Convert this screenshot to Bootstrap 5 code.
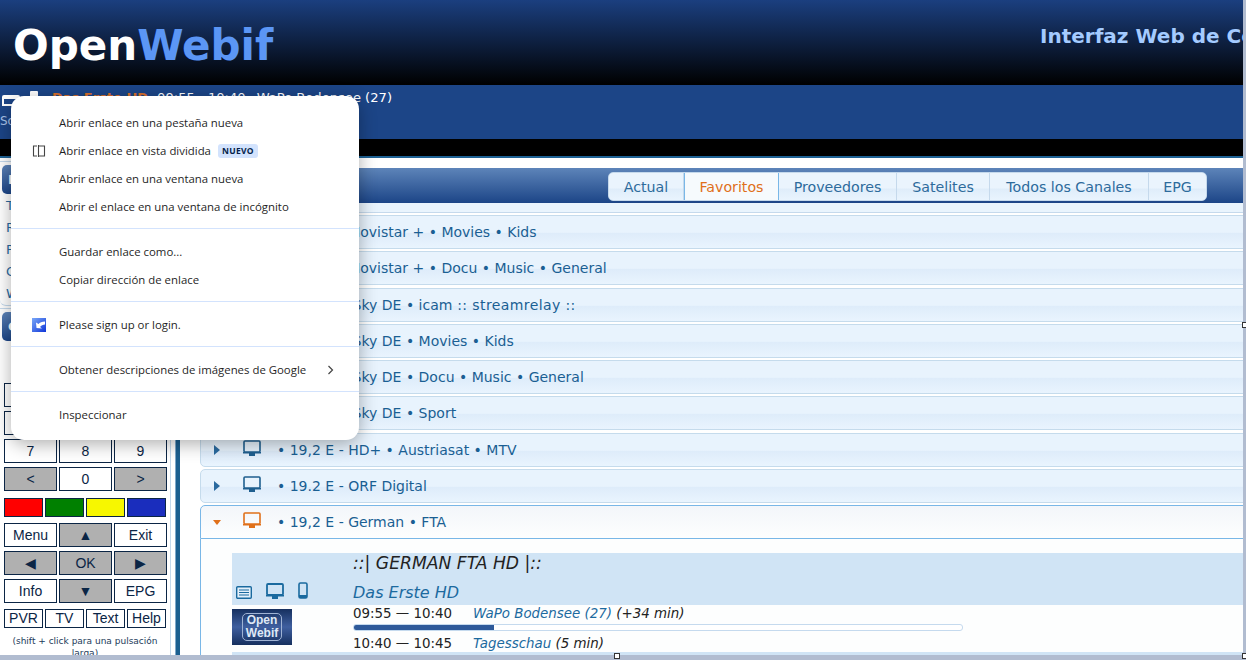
<!DOCTYPE html>
<html lang="es">
<head>
    <meta charset="UTF-8">
    <title>OpenWebif</title>
    <link href="https://cdn.jsdelivr.net/npm/bootstrap@5.3.0/dist/css/bootstrap.min.css" rel="stylesheet">
    <style>
        html, body { height: 660px; overflow: hidden; }
        body { background: #b1bcd0; font-family: "DejaVu Sans", sans-serif; font-size: 14px; color: #222; }
        .page-wrap { width: 1243px; height: 655px; overflow: hidden; background: #fff; }

        .top-head { height: 85px; background: linear-gradient(#1b3f7f, #000); }
        .logo-text { font-size: 42px; font-weight: 700; color: #fff; padding-left: 13px; line-height: 92px; width: 1040px; flex: none; }
        .logo-text span { color: #5b96f5; }
        .head-title { font-size: 20px; font-weight: 700; color: #a4cbff; white-space: nowrap; line-height: 72px; }

        .now-bar { height: 54px; background: #1c4587; color: #fff; font-size: 13.1px; position: relative; }
        .now-line { height: 24px; white-space: nowrap; padding: 1px 0 0 2px; }
        .now-line b { color: #d9702c; font-weight: 700; margin: 0 9px 0 13px; font-size: 13px; }
        .now-line svg { margin-right: 9px; }
        .now-line svg + svg { margin-right: 0; }
        .now-time { margin-right: 11px; }
        .now-soft { color: #a9c4ea; font-size: 12px; line-height: 16px; margin-top: 4px; }
        .black-gap { height: 19px; background: #000; border-bottom: 2px solid #1e6294; }

        .left-col { width: 171px; flex: none; padding: 3px 0 0 0; }
        .side-panel { border: 1px solid #c4d9ec; border-left: 0; border-radius: 0 6px 6px 6px; padding: 3px 2px 0 2px; margin-bottom: 2px; }
        .side-head { height: 29px; width: 162px; border-radius: 5px; background: linear-gradient(#5c83b8, #1c4587); color: #fff; padding: 5px 6px; font-weight: 700; font-size: 13px; }
        .side-link { display: block; color: #2a6a9f; text-decoration: none; font-size: 13px; line-height: 22px; padding-left: 4px; }
        .side-link:first-of-type { margin-top: 1px; }

        .remote-wrap { border-right: 1px solid #c4d9ec; padding: 42px 3px 0 4px; height: 336px; overflow: hidden; }
        .key-grid { display: grid; grid-template-columns: 53px 53px 53px; gap: 4px 2px; margin-bottom: 4px; }
        .key-btn { height: 24px; background: #fff; border: 1px solid #0b2545; color: #0b2545; font-family: "Liberation Sans", sans-serif; font-size: 14px; line-height: 22px; text-align: center; }
        .key-grey { background: #b0b0b0; }
        .key-four { display: grid; grid-template-columns: 39px 39px 39px 39px; gap: 2px; padding-top: 2px; }
        .key-colors { padding-top: 3px; padding-bottom: 2px; margin-bottom: 4px; }
        .key-color { height: 19px; border: 1px solid #0b2545; }
        .key-red { background: #ff0000; }
        .key-green { background: #008000; }
        .key-yellow { background: #f7f700; }
        .key-blue { background: #1a2dbd; }
        .key-small { height: 19px; border: 1px solid #0b2545; font-family: "Liberation Sans", sans-serif; font-size: 14px; line-height: 17px; text-align: center; color: #0b2545; }
        .remote-note { font-size: 9px; line-height: 12px; text-align: center; margin: 7px 4px 0 3px; color: #1c3a5a; }

        .side-rule { width: 5px; flex: none; margin-left: 4px; background: #1b5f8f; border-left: 1px solid #7fa8c9; }
        .right-col { flex: 1; min-width: 0; padding: 10px 0 0 20px; overflow: hidden; }
        .tab-bar { height: 35px; padding: 4px 0 0 408px; background: linear-gradient(#5d84b9, #1c4587); }
        .tab-group { width: 599px; height: 29px; border: 1px solid #c5d9ec; border-radius: 5px; background: linear-gradient(#eaf4fd 55%, #dfedfa 60%, #e9f4fe); overflow: hidden; }
        .tab-item { color: #2d6b9c; font-size: 14.2px; line-height: 29px; text-align: center; border-right: 1px solid #c5d9ec; text-decoration: none; flex: none; }
        .tab-item.is-on { color: #e0701a; background: #f6fafd; border: 1px solid #79b7e7; border-width: 0 1px; }
        .tab-w1 { width: 75px; }
        .tab-w2 { width: 95px; }
        .tab-w3 { width: 118px; }
        .tab-w4 { width: 93px; }
        .tab-w5 { width: 159px; }
        .tab-w6 { width: 57px; border-right: 0; }

        .rows-top { height: 10px; background: #e9f4fd; border-bottom: 1px solid #c5d9ec; margin-bottom: 2px; }
        .bq-row { height: 34px; margin: 0 -6px 2.25px 0; border: 1px solid #c5dbec; border-radius: 5px 0 0 5px; background: linear-gradient(#e8f3fd 51%, #deecfa 54%, #e9f4fe); color: #1a5f93; display: flex; align-items: center; font-size: 14px; line-height: 32px; }
        .bq-row.is-open { border-color: #79b7e7; border-radius: 5px 0 0 0; margin-bottom: 0; background: linear-gradient(#f3f6fa, #fdfefe); }
        .bq-caret { width: 0; height: 0; margin-left: 13px; border-left: 6px solid #2a6a9f; border-top: 5px solid transparent; border-bottom: 5px solid transparent; flex: none; }
        .bq-row.is-open .bq-caret { border: 4px solid transparent; border-top: 5px solid #e0701a; border-bottom: 0; margin-left: 12px; }
        .bq-screen { margin: -3px 16px 0 23px; flex: none; }
        .bq-row.is-open .bq-screen { margin-left: 22px; }
        .bq-open-body { height: 120px; margin-right: -6px; border-left: 1px solid #79b7e7; padding: 14px 0 0 31px; background: #fdfefe; }
        .wide-text { letter-spacing: .4px; }

        .chan-band { height: 52px; background: #d0e4f5; }
        .chan-icons { width: 121px; flex: none; padding: 0 0 6px 4px; gap: 14px; }
        .chan-titles { font-style: italic; font-size: 16px; line-height: 26px; }
        .chan-name { font-size: 17.2px; line-height: 20px; margin-bottom: 7px; }
        .chan-titles a { color: #1c6a9f; text-decoration: none; }
        .epg-row { height: 47px; }
        .picon-box { width: 60px; height: 36px; margin: 4px 61px 0 0; flex: none; background: linear-gradient(#16305f, #3f5f9f 50%, #16305f); padding: 4px 10px; }
        .picon-inner { height: 28px; border: 1px solid #9fb3d4; border-radius: 5px; color: #dfe8f5; font-size: 12px; font-weight: 700; line-height: 13px; text-align: center; font-family: "Liberation Sans", sans-serif; }
        .epg-line { font-size: 13.4px; line-height: 18px; white-space: nowrap; }
        .epg-line span { display: inline-block; width: 120px; }
        .epg-line i { color: #222; }
        .epg-line i a { color: #1c6a9f; text-decoration: none; }
        .epg-progress { width: 610px; height: 7px; border: 1px solid #c5daee; border-radius: 3px; margin: 1px 0 4px; overflow: hidden; background: #fff; }
        .epg-fill { height: 100%; background: #2e5a9a; }
        .next-band { height: 6px; background: #d0e4f5; }

        .ctx-menu.dropdown-menu { left: 11px; top: 96px; width: 348px; height: 344px; margin: 0; padding: 13px 0 0; border: 0; border-radius: 13px; box-shadow: 0 4px 18px rgba(0,0,0,.32); font-family: "Open Sans", sans-serif; font-size: 11.4px; color: #1f1f1f; z-index: 20; }
        .ctx-menu .dropdown-item { height: 28px; line-height: 28px; padding: 0 0 0 48px; font-size: 11.4px; color: #1f1f1f; position: relative; white-space: nowrap; }
        .ctx-menu .dropdown-divider { margin: 6.5px 0 9.5px; border-top: 1px solid #d3e3fd; opacity: 1; }
        .ctx-tag { display: inline-block; background: #d3e3fd; color: #041e49; font-size: 8.5px; font-weight: 700; line-height: 14px; padding: 0 4px; border-radius: 3px; margin-left: 7px; letter-spacing: .3px; vertical-align: 1px; }
        .ctx-ico { position: absolute; left: 21px; top: 7px; }
        .ctx-arrow { position: absolute; right: 25px; top: 9px; }
        .drag-dot { position: absolute; width: 6px; height: 6px; background: #fff; border: 1px solid #333; z-index: 10; }
        .dot-edge { left: 1242px; top: 322px; }
        .dot-bottom { left: 614px; top: 653px; }
        .dot-corner { left: 1242px; top: 653px; }
    </style>
</head>
<body>
    <div class="page-wrap">
        <div class="top-head d-flex">
            <div class="logo-text">Open<span>Webif</span></div>
            <div class="head-title">Interfaz Web de Control</div>
        </div>

        <div class="now-bar">
            <div class="now-line d-flex align-items-center">
                <svg width="18" height="17" viewBox="0 0 18 17"><path d="M1 17V9h16v8" fill="none" stroke="#fff" stroke-width="2"/><rect x="1" y="7" width="16" height="9" rx="1" fill="none" stroke="#fff" stroke-width="2"/></svg>
                <svg width="10" height="16" viewBox="0 0 10 16"><rect x="1" y="1" width="8" height="14" rx="1" fill="#fff"/></svg>
                <b>Das Erste HD</b><span class="now-time">09:55 - 10:40</span><span>WaPo Bodensee (27)</span>
            </div>
            <div class="now-soft">Soporte</div>
        </div>
        <div class="black-gap"></div>

        <div class="d-flex">
            <div class="left-col">
                <div class="side-panel">
                    <div class="side-head">Menú</div>
                    <a class="side-link" href="#">Televisión</a>
                    <a class="side-link" href="#">Radio</a>
                    <a class="side-link" href="#">Películas</a>
                    <a class="side-link" href="#">Grabaciones</a>
                    <a class="side-link" href="#">WebTV</a>
                </div>
                <div class="side-panel mb-0 border-bottom-0">
                    <div class="side-head">Control</div>
                </div>
                <div class="remote-wrap">
                    <div class="key-grid">
                        <div class="key-btn">1</div><div class="key-btn">2</div><div class="key-btn">3</div>
                        <div class="key-btn">4</div><div class="key-btn">5</div><div class="key-btn">6</div>
                        <div class="key-btn">7</div><div class="key-btn">8</div><div class="key-btn">9</div>
                        <div class="key-btn key-grey">&lt;</div><div class="key-btn">0</div><div class="key-btn key-grey">&gt;</div>
                    </div>
                    <div class="key-four key-colors">
                        <div class="key-color key-red"></div>
                        <div class="key-color key-green"></div>
                        <div class="key-color key-yellow"></div>
                        <div class="key-color key-blue"></div>
                    </div>
                    <div class="key-grid">
                        <div class="key-btn">Menu</div><div class="key-btn key-grey">▲</div><div class="key-btn">Exit</div>
                        <div class="key-btn key-grey">◀</div><div class="key-btn key-grey">OK</div><div class="key-btn key-grey">▶</div>
                        <div class="key-btn">Info</div><div class="key-btn key-grey">▼</div><div class="key-btn">EPG</div>
                    </div>
                    <div class="key-four">
                        <div class="key-small">PVR</div><div class="key-small">TV</div><div class="key-small">Text</div><div class="key-small">Help</div>
                    </div>
                    <div class="remote-note">(shift + click para una pulsación larga)</div>
                </div>
            </div>
            <div class="side-rule"></div>

            <div class="right-col">
                <div class="tab-bar">
                    <div class="tab-group d-flex">
                        <a class="tab-item tab-w1" href="#">Actual</a>
                        <a class="tab-item tab-w2 is-on" href="#">Favoritos</a>
                        <a class="tab-item tab-w3" href="#">Proveedores</a>
                        <a class="tab-item tab-w4" href="#">Satelites</a>
                        <a class="tab-item tab-w5" href="#">Todos los Canales</a>
                        <a class="tab-item tab-w6" href="#">EPG</a>
                    </div>
                </div>
                <div class="rows-top"></div>
                <div id="bouquetRows"></div>
                <div class="bq-row is-open">
                    <span class="bq-caret"></span>
                    <svg class="bq-screen" width="18" height="17" viewBox="0 0 18 17"><rect x="1" y="1" width="16" height="11" rx="1" fill="none" stroke="#e0701a" stroke-width="1.6"/><path d="M0 12h18v1.500H0zM6 13h6v3H6z" fill="#e0701a"/></svg>
                    <span>• 19,2 E - German • FTA</span>
                </div>
                <div class="bq-open-body">
                    <div class="chan-band d-flex">
                        <div class="chan-icons d-flex align-items-end">
                            <svg width="16" height="13" viewBox="0 0 16 13"><rect x=".7" y=".7" width="14.6" height="11.6" rx="1" fill="#e4f0fa" stroke="#1a6a9f" stroke-width="1.4"/><path d="M3 4h10M3 6.500h10M3 9h10" stroke="#1a6a9f" stroke-width="1.2"/></svg>
                            <svg width="18" height="16" viewBox="0 0 18 16"><rect x="1" y="1" width="16" height="11" rx="1" fill="none" stroke="#1a6a9f" stroke-width="1.8"/><path d="M0 12h18v1.500H0zM6 13h6v3H6z" fill="#1a6a9f"/></svg>
                            <svg width="10" height="17" viewBox="0 0 10 17"><rect x="1" y="1" width="8" height="15" rx="1.500" fill="none" stroke="#1a6a9f" stroke-width="1.6"/><path d="M1 13h8v3H1z" fill="#1a6a9f"/></svg>
                        </div>
                        <div class="chan-titles">
                            <div class="chan-name">::| GERMAN FTA HD |::</div>
                            <div><a href="#">Das Erste HD</a></div>
                        </div>
                    </div>
                    <div class="epg-row d-flex">
                        <div class="picon-box"><div class="picon-inner">Open<br>Webif</div></div>
                        <div>
                            <div class="epg-line"><span>09:55 — 10:40</span><i><a href="#">WaPo Bodensee (27)</a> (+34 min)</i></div>
                            <div class="epg-progress"><div class="epg-fill" style="width:23%"></div></div>
                            <div class="epg-line"><span>10:40 — 10:45</span><i><a href="#">Tagesschau</a> (5 min)</i></div>
                        </div>
                    </div>
                    <div class="next-band"></div>
                </div>
            </div>
        </div>
    </div>

    <span class="drag-dot dot-edge"></span>
    <span class="drag-dot dot-bottom"></span>
    <span class="drag-dot dot-corner"></span>

    <ul class="dropdown-menu show ctx-menu list-unstyled">
        <li><a class="dropdown-item" href="#">Abrir enlace en una pestaña nueva</a></li>
        <li><a class="dropdown-item" href="#">
            <svg class="ctx-ico" width="14" height="14" viewBox="0 0 14 14"><path d="M5 2H1.500v10H5M6.500 1v12M6.500 2h6v10h-6" fill="none" stroke="#444" stroke-width="1.100"/></svg>
            Abrir enlace en vista dividida<span class="ctx-tag">NUEVO</span></a></li>
        <li><a class="dropdown-item" href="#">Abrir enlace en una ventana nueva</a></li>
        <li><a class="dropdown-item" href="#">Abrir el enlace en una ventana de incógnito</a></li>
        <li><hr class="dropdown-divider"></li>
        <li><a class="dropdown-item" href="#">Guardar enlace como...</a></li>
        <li><a class="dropdown-item" href="#">Copiar dirección de enlace</a></li>
        <li><hr class="dropdown-divider"></li>
        <li><a class="dropdown-item" href="#">
            <svg class="ctx-ico" width="14" height="14" viewBox="0 0 14 14"><defs><linearGradient id="signGrad" x1="0" y1="0" x2="1" y2="1"><stop offset="0" stop-color="#7aa8f8"/><stop offset="1" stop-color="#0f35d8"/></linearGradient></defs><rect width="14" height="14" fill="url(#signGrad)"/><path d="M13 3.500C10 3.500 7.500 4.500 6.500 6L4 4.500 4.500 10l5.500.5-2-1.500c1-1.500 3-2.500 5-2.500z" fill="#fff"/></svg>
            Please sign up or login.</a></li>
        <li><hr class="dropdown-divider"></li>
        <li><a class="dropdown-item" href="#">Obtener descripciones de imágenes de Google
            <svg class="ctx-arrow" width="7" height="10" viewBox="0 0 7 10"><path d="M1.500 1l4 4-4 4" fill="none" stroke="#444" stroke-width="1.200"/></svg></a></li>
        <li><hr class="dropdown-divider"></li>
        <li><a class="dropdown-item" href="#">Inspeccionar</a></li>
    </ul>

    <script src="https://cdn.jsdelivr.net/npm/bootstrap@5.3.0/dist/js/bootstrap.bundle.min.js"></script>
    <script>
        // Collapsed bouquet rows
        const bouquets = [
            '• 19,2 E - Movistar + • Movies • Kids',
            '• 19,2 E - Movistar + • Docu • Music • General',
            '• 19,2 E -&nbsp; Sky DE • icam<span class="wide-text"> :: streamrelay ::</span>',
            '• 19,2 E -&nbsp; Sky DE • Movies • Kids',
            '• 19,2 E -&nbsp; Sky DE • Docu • Music • General',
            '• 19,2 E -&nbsp; Sky DE • Sport',
            '• 19,2 E - HD+ • Austriasat • MTV',
            '• 19.2 E - ORF Digital'
        ];
        const screenIcon = '<svg class="bq-screen" width="18" height="17" viewBox="0 0 18 17"><rect x="1" y="1" width="16" height="11" rx="1" fill="none" stroke="#1f5f8f" stroke-width="1.6"/><path d="M0 12h18v1.500H0zM6 13h6v3H6z" fill="#1f5f8f"/></svg>';
        const holder = document.getElementById('bouquetRows');
        bouquets.forEach(name => {
            const row = document.createElement('div');
            row.className = 'bq-row';
            row.innerHTML = `<span class="bq-caret"></span>${screenIcon}<span>${name}</span>`;
            holder.appendChild(row);
        });
    </script>
</body>
</html>
